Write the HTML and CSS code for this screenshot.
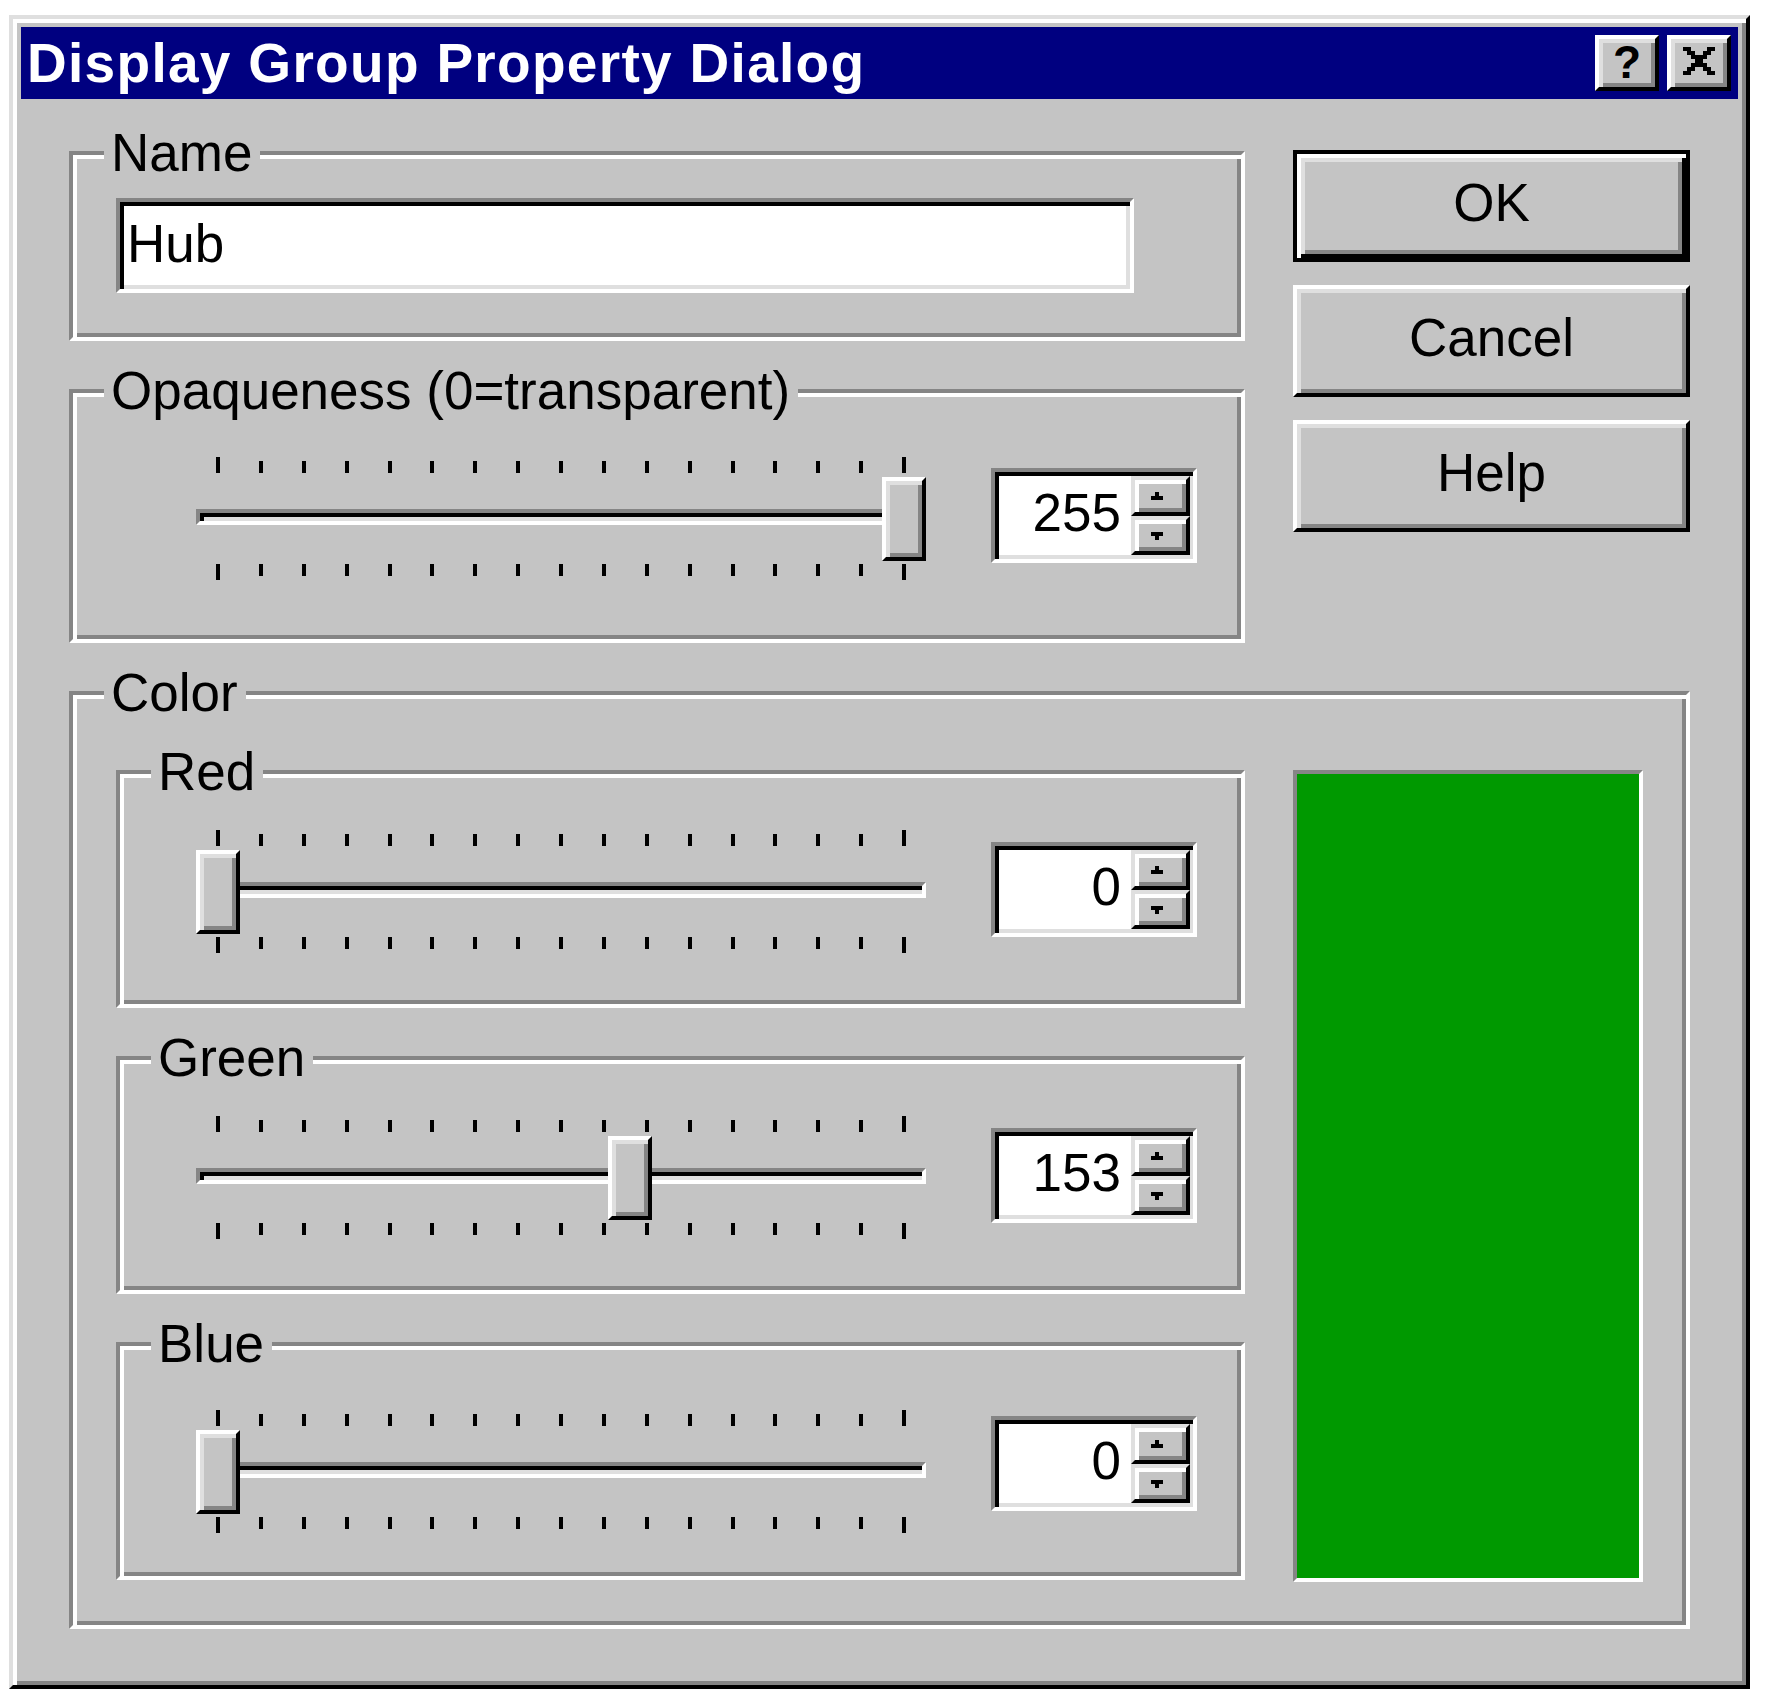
FILE: index.html
```html
<!DOCTYPE html>
<html lang="en">
<head>
<meta charset="utf-8">
<title>Display Group Property Dialog</title>
<link rel="stylesheet" href="styles.css">
</head>
<body>
<div class="screen">
  <div class="window">
    <div class="titlebar">
      <div class="title">Display Group Property Dialog</div>
      <div class="caption-buttons">
        <div class="cap-btn cap-help">?</div>
        <div class="cap-btn cap-close">
          <svg class="close-glyph" width="32" height="28" viewBox="0 0 8 7" shape-rendering="crispEdges">
            <rect x="0" y="0" width="2" height="1"/><rect x="6" y="0" width="2" height="1"/>
            <rect x="1" y="1" width="2" height="1"/><rect x="5" y="1" width="2" height="1"/>
            <rect x="2" y="2" width="4" height="1"/>
            <rect x="3" y="3" width="2" height="1"/>
            <rect x="2" y="4" width="4" height="1"/>
            <rect x="1" y="5" width="2" height="1"/><rect x="5" y="5" width="2" height="1"/>
            <rect x="0" y="6" width="2" height="1"/><rect x="6" y="6" width="2" height="1"/>
          </svg>
        </div>
      </div>
    </div>

    <div class="client">
      <div class="upper">
        <div class="left-col">
          <div class="group name-group">
            <div class="legend">Name</div>
            <div class="field">Hub</div>
          </div>

          <div class="group opacity-group">
            <div class="legend">Opaqueness (0=transparent)</div>
            <div class="slider-row">
              <div class="slider">
                <div class="ticks ticks-above">
                  <span class="tick long"></span><span class="tick"></span><span class="tick"></span><span class="tick"></span><span class="tick"></span><span class="tick"></span><span class="tick"></span><span class="tick"></span><span class="tick"></span><span class="tick"></span><span class="tick"></span><span class="tick"></span><span class="tick"></span><span class="tick"></span><span class="tick"></span><span class="tick"></span><span class="tick long"></span>
                </div>
                <div class="track-area">
                  <div class="track"></div>
                  <div class="thumb" style="left: 686px"></div>
                </div>
                <div class="ticks ticks-below">
                  <span class="tick long"></span><span class="tick"></span><span class="tick"></span><span class="tick"></span><span class="tick"></span><span class="tick"></span><span class="tick"></span><span class="tick"></span><span class="tick"></span><span class="tick"></span><span class="tick"></span><span class="tick"></span><span class="tick"></span><span class="tick"></span><span class="tick"></span><span class="tick"></span><span class="tick long"></span>
                </div>
              </div>
              <div class="spin">
                <div class="spin-value">255</div>
                <div class="spin-buttons">
                  <div class="spin-btn up"><svg class="arrow" width="12" height="8" viewBox="0 0 3 2" shape-rendering="crispEdges"><rect x="1" y="0" width="1" height="1"/><rect x="0" y="1" width="3" height="1"/></svg></div>
                  <div class="spin-btn down"><svg class="arrow" width="12" height="8" viewBox="0 0 3 2" shape-rendering="crispEdges"><rect x="0" y="0" width="3" height="1"/><rect x="1" y="1" width="1" height="1"/></svg></div>
                </div>
              </div>
            </div>
          </div>
        </div>

        <div class="buttons">
          <div class="btn default">OK</div>
          <div class="btn">Cancel</div>
          <div class="btn">Help</div>
        </div>
      </div>

      <div class="group color-group">
        <div class="legend">Color</div>
        <div class="color-body">
          <div class="channels">

            <div class="group channel">
              <div class="legend">Red</div>
              <div class="slider-row">
                <div class="slider">
                  <div class="ticks ticks-above">
                    <span class="tick long"></span><span class="tick"></span><span class="tick"></span><span class="tick"></span><span class="tick"></span><span class="tick"></span><span class="tick"></span><span class="tick"></span><span class="tick"></span><span class="tick"></span><span class="tick"></span><span class="tick"></span><span class="tick"></span><span class="tick"></span><span class="tick"></span><span class="tick"></span><span class="tick long"></span>
                  </div>
                  <div class="track-area">
                    <div class="track"></div>
                    <div class="thumb" style="left: 0px"></div>
                  </div>
                  <div class="ticks ticks-below">
                    <span class="tick long"></span><span class="tick"></span><span class="tick"></span><span class="tick"></span><span class="tick"></span><span class="tick"></span><span class="tick"></span><span class="tick"></span><span class="tick"></span><span class="tick"></span><span class="tick"></span><span class="tick"></span><span class="tick"></span><span class="tick"></span><span class="tick"></span><span class="tick"></span><span class="tick long"></span>
                  </div>
                </div>
                <div class="spin">
                  <div class="spin-value">0</div>
                  <div class="spin-buttons">
                    <div class="spin-btn up"><svg class="arrow" width="12" height="8" viewBox="0 0 3 2" shape-rendering="crispEdges"><rect x="1" y="0" width="1" height="1"/><rect x="0" y="1" width="3" height="1"/></svg></div>
                    <div class="spin-btn down"><svg class="arrow" width="12" height="8" viewBox="0 0 3 2" shape-rendering="crispEdges"><rect x="0" y="0" width="3" height="1"/><rect x="1" y="1" width="1" height="1"/></svg></div>
                  </div>
                </div>
              </div>
            </div>

            <div class="group channel">
              <div class="legend">Green</div>
              <div class="slider-row">
                <div class="slider">
                  <div class="ticks ticks-above">
                    <span class="tick long"></span><span class="tick"></span><span class="tick"></span><span class="tick"></span><span class="tick"></span><span class="tick"></span><span class="tick"></span><span class="tick"></span><span class="tick"></span><span class="tick"></span><span class="tick"></span><span class="tick"></span><span class="tick"></span><span class="tick"></span><span class="tick"></span><span class="tick"></span><span class="tick long"></span>
                  </div>
                  <div class="track-area">
                    <div class="track"></div>
                    <div class="thumb" style="left: 411.6px"></div>
                  </div>
                  <div class="ticks ticks-below">
                    <span class="tick long"></span><span class="tick"></span><span class="tick"></span><span class="tick"></span><span class="tick"></span><span class="tick"></span><span class="tick"></span><span class="tick"></span><span class="tick"></span><span class="tick"></span><span class="tick"></span><span class="tick"></span><span class="tick"></span><span class="tick"></span><span class="tick"></span><span class="tick"></span><span class="tick long"></span>
                  </div>
                </div>
                <div class="spin">
                  <div class="spin-value">153</div>
                  <div class="spin-buttons">
                    <div class="spin-btn up"><svg class="arrow" width="12" height="8" viewBox="0 0 3 2" shape-rendering="crispEdges"><rect x="1" y="0" width="1" height="1"/><rect x="0" y="1" width="3" height="1"/></svg></div>
                    <div class="spin-btn down"><svg class="arrow" width="12" height="8" viewBox="0 0 3 2" shape-rendering="crispEdges"><rect x="0" y="0" width="3" height="1"/><rect x="1" y="1" width="1" height="1"/></svg></div>
                  </div>
                </div>
              </div>
            </div>

            <div class="group channel">
              <div class="legend">Blue</div>
              <div class="slider-row low">
                <div class="slider">
                  <div class="ticks ticks-above">
                    <span class="tick long"></span><span class="tick"></span><span class="tick"></span><span class="tick"></span><span class="tick"></span><span class="tick"></span><span class="tick"></span><span class="tick"></span><span class="tick"></span><span class="tick"></span><span class="tick"></span><span class="tick"></span><span class="tick"></span><span class="tick"></span><span class="tick"></span><span class="tick"></span><span class="tick long"></span>
                  </div>
                  <div class="track-area">
                    <div class="track"></div>
                    <div class="thumb" style="left: 0px"></div>
                  </div>
                  <div class="ticks ticks-below">
                    <span class="tick long"></span><span class="tick"></span><span class="tick"></span><span class="tick"></span><span class="tick"></span><span class="tick"></span><span class="tick"></span><span class="tick"></span><span class="tick"></span><span class="tick"></span><span class="tick"></span><span class="tick"></span><span class="tick"></span><span class="tick"></span><span class="tick"></span><span class="tick"></span><span class="tick long"></span>
                  </div>
                </div>
                <div class="spin">
                  <div class="spin-value">0</div>
                  <div class="spin-buttons">
                    <div class="spin-btn up"><svg class="arrow" width="12" height="8" viewBox="0 0 3 2" shape-rendering="crispEdges"><rect x="1" y="0" width="1" height="1"/><rect x="0" y="1" width="3" height="1"/></svg></div>
                    <div class="spin-btn down"><svg class="arrow" width="12" height="8" viewBox="0 0 3 2" shape-rendering="crispEdges"><rect x="0" y="0" width="3" height="1"/><rect x="1" y="1" width="1" height="1"/></svg></div>
                  </div>
                </div>
              </div>
            </div>

          </div>
          <div class="swatch"></div>
        </div>
      </div>
    </div>
  </div>
</div>
</body>
</html>
```

FILE: styles.css
```css
:root {
  --face: #c4c4c4;
  --shadow: #858585;
  --light: #dfdfdf;
}

* { box-sizing: border-box; }

html, body {
  margin: 0;
  background: #fff;
}

body {
  font-family: "Liberation Sans", Arial, sans-serif;
  font-size: 53px;
  color: #000;
}

.screen {
  padding: 15px 0 0 9px;
}

.window {
  width: 1741px;
  height: 1674px;
  background: var(--face);
  border: 4px solid;
  border-color: var(--light) #000 #000 var(--light);
  box-shadow: inset 4px 4px #fff, inset -4px -4px var(--shadow);
  padding: 8px;
}

/* title bar */
.titlebar {
  height: 72px;
  background: #000080;
  display: flex;
  align-items: center;
}

.title {
  flex: 1;
  color: #fff;
  font-weight: bold;
  font-size: 55px;
  letter-spacing: 1.3px;
  line-height: 72px;
  padding-left: 6px;
  white-space: nowrap;
}

.caption-buttons {
  display: flex;
  gap: 8px;
  margin-right: 7px;
}

.cap-btn {
  width: 64px;
  height: 56px;
  background: var(--face);
  border: 4px solid;
  border-color: #fff #000 #000 #fff;
  box-shadow: inset 4px 4px var(--light), inset -4px -4px var(--shadow);
  display: flex;
  align-items: center;
  justify-content: center;
}

.cap-help {
  font-weight: bold;
  font-size: 46px;
  line-height: 46px;
  padding-bottom: 2px;
}

.cap-close {
  padding-bottom: 4px;
}

.close-glyph {
  display: block;
  fill: #000;
}

/* client area */
.client {
  padding: 52px 0 0 48px;
}

.upper {
  display: grid;
  grid-template-columns: 1176px 397px;
  column-gap: 48px;
  align-items: start;
}

.left-col {
  display: flex;
  flex-direction: column;
  gap: 48px;
}

/* etched group box */
.group {
  position: relative;
  border: 4px solid;
  border-color: var(--shadow) #fff #fff var(--shadow);
  box-shadow: inset 4px 4px #fff, inset -4px -4px var(--shadow);
}

.legend {
  position: absolute;
  top: -22px;
  left: 31px;
  padding: 0 8px 0 7px;
  background: var(--face);
  line-height: 40px;
  white-space: nowrap;
}

.name-group {
  height: 190px;
  padding: 43px 0 0 43px;
}

.field {
  width: 1018px;
  height: 95px;
  background: #fff;
  border: 4px solid;
  border-color: var(--shadow) #fff #fff var(--shadow);
  box-shadow: inset 4px 4px #000, inset -4px -4px var(--light);
  padding: 4px 4px 4px 7px;
  line-height: 75px;
  white-space: nowrap;
}

.opacity-group {
  height: 254px;
}

/* slider rows */
.slider-row {
  display: flex;
  align-items: flex-start;
  padding: 56px 0 0 76px;
}

.opacity-group .slider-row {
  padding: 64px 0 0 123px;
}

.slider-row.low {
  padding-top: 64px;
}

.slider {
  width: 730px;
}

.ticks {
  display: flex;
  justify-content: space-between;
  width: 690px;
  height: 16px;
  margin-left: 20px;
}

.ticks-above { align-items: flex-end; }

.ticks-below {
  align-items: flex-start;
  margin-top: 3px;
}

.tick {
  width: 4px;
  height: 12px;
  background: #000;
}

.tick.long { height: 16px; }

.track-area {
  position: relative;
  height: 84px;
  margin-top: 4px;
  padding-top: 32px;
}

.track {
  height: 16px;
  border: 4px solid;
  border-color: var(--shadow) #fff #fff var(--shadow);
  box-shadow: inset 4px 4px #000, inset -4px -4px var(--light);
}

.thumb {
  position: absolute;
  top: 0;
  width: 44px;
  height: 84px;
  background: var(--face);
  border: 4px solid;
  border-color: #fff #000 #000 #fff;
  box-shadow: inset 4px 4px var(--light), inset -4px -4px var(--shadow);
}

/* spin box */
.spin {
  width: 206px;
  height: 95px;
  margin: 12px 0 0 65px;
  display: flex;
  background: #fff;
  border: 4px solid;
  border-color: var(--shadow) #fff #fff var(--shadow);
  box-shadow: inset 4px 4px #000, inset -4px -4px var(--light);
  padding: 4px 3px 4px 4px;
}

.opacity-group .spin { margin-top: 11px; }
.slider-row.low .spin { margin-top: 6px; }

.spin-value {
  flex: 1;
  text-align: right;
  padding-right: 10px;
  line-height: 73px;
}

.spin-buttons {
  width: 59px;
  display: flex;
  flex-direction: column;
}

.spin-btn {
  display: flex;
  background: var(--face);
  border: 4px solid;
  border-color: var(--light) #000 #000 var(--light);
  box-shadow: inset 4px 4px #fff, inset -4px -4px var(--shadow);
  padding: 12px 0 0 16px;
}

.spin-btn.up { height: 40px; }
.spin-btn.down { height: 39px; }

.arrow {
  display: block;
  fill: #000;
}

/* push buttons */
.buttons {
  display: flex;
  flex-direction: column;
  gap: 23px;
  margin-top: -1px;
}

.btn {
  height: 112px;
  display: flex;
  align-items: center;
  justify-content: center;
  background: var(--face);
  border: 4px solid;
  border-color: #fff #000 #000 #fff;
  box-shadow: inset 4px 4px var(--light), inset -4px -4px var(--shadow);
  padding-bottom: 7px;
  line-height: 60px;
}

.btn.default {
  border-color: #000;
  box-shadow: inset 4px 4px #fff, inset -4px -4px #000, inset 8px 8px var(--light), inset -8px -8px var(--shadow);
}

/* color group */
.color-group {
  margin-top: 48px;
  width: 1621px;
  height: 938px;
  padding: 75px 0 0 43px;
}

.color-body {
  display: grid;
  grid-template-columns: 1129px 350px;
  column-gap: 48px;
  align-items: start;
}

.channels {
  display: flex;
  flex-direction: column;
  gap: 48px;
}

.channel {
  height: 238px;
}

.swatch {
  height: 812px;
  background: #009900;
  border: 4px solid;
  border-color: var(--shadow) #fff #fff var(--shadow);
}
```
